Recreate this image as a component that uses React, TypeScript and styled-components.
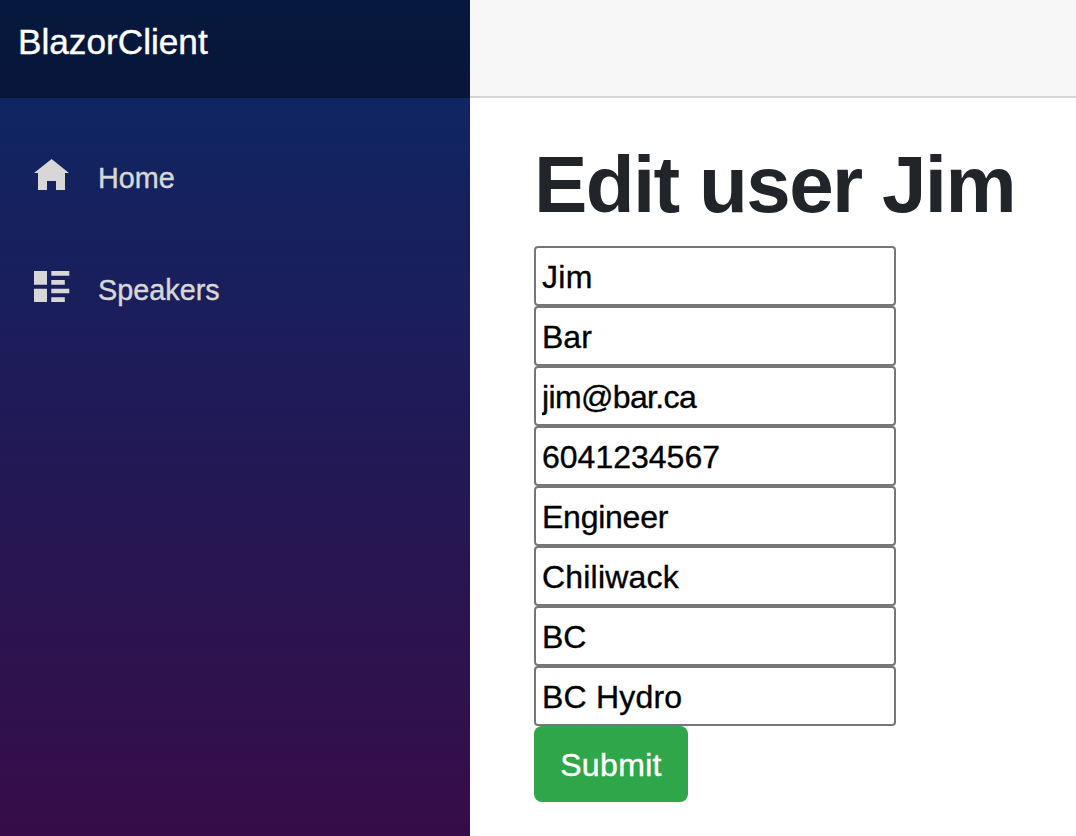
import React from "react";
import styled, { createGlobalStyle } from "styled-components";

const GlobalStyle = createGlobalStyle`
  * { box-sizing: border-box; }
  body {
    margin: 0;
    overflow: hidden;
    background: #fff;
    font-family: "Liberation Sans", Arial, sans-serif;
    color: #212529;
  }
`;

const Page = styled.div`
  display: flex;
  width: 1076px;
  height: 836px;
  overflow: hidden;
`;

const Sidebar = styled.aside`
  flex: none;
  width: 470px;
  height: 836px;
  background: linear-gradient(180deg, rgb(10, 41, 102) 0%, rgb(54, 12, 72) 836px);
`;

const Brand = styled.header`
  display: flex;
  align-items: center;
  height: 98px;
  padding: 0 18px 14px;
  background: rgba(0, 0, 0, 0.4);
  color: #fff;
`;

const Label = styled.span<{ $size: number; $spacing?: number }>`
  font-size: ${(p) => p.$size}px;
  letter-spacing: ${(p) => p.$spacing ?? 0}px;
  white-space: nowrap;
  -webkit-text-stroke: 0.4px currentColor;
`;

const Nav = styled.nav`
  display: flex;
  flex-direction: column;
  gap: 32px;
  padding: 40px 32px;
`;

const NavItem = styled.a`
  display: flex;
  align-items: center;
  gap: 28px;
  height: 80px;
  color: #d7d7d7;
`;

const NavIcon = styled.svg`
  flex: none;
  width: 38px;
  height: 38px;
  margin-top: -6px;
  fill: currentColor;
`;

const Main = styled.main`
  flex: 1;
`;

const TopRow = styled.div`
  height: 98px;
  background: #f7f7f7;
  border-bottom: 2px solid #d6d5d5;
`;

const Content = styled.section`
  padding: 39px 0 0 64px;
`;

const Title = styled.h1`
  margin: 0 0 13px;
  height: 96px;
  font-size: 80px;
  font-weight: 700;
  line-height: 96px;
  letter-spacing: -1.65px;
  white-space: nowrap;
`;

const Form = styled.form`
  display: flex;
  flex-direction: column;
  align-items: flex-start;
`;

const Field = styled.input<{ $spacing: number }>`
  display: block;
  width: 362px;
  height: 60px;
  padding: 2px 6px 0;
  border: 2px solid #767676;
  border-radius: 4px;
  background: #fff;
  color: #000;
  font: 32px "Liberation Sans", Arial, sans-serif;
  letter-spacing: ${(p) => p.$spacing}px;
  -webkit-text-stroke: 0.35px currentColor;
`;

const Submit = styled.button`
  width: 154px;
  height: 76px;
  padding: 2px 0 0;
  border: 0;
  border-radius: 8px;
  background: #30a64a;
  color: #fff;
  font: 32px "Liberation Sans", Arial, sans-serif;
  letter-spacing: 0.35px;
  -webkit-text-stroke: 0.4px currentColor;
`;

const fields = [
  { value: "Jim", spacing: 0.3 },
  { value: "Bar", spacing: 0 },
  { value: "jim@bar.ca", spacing: -0.65 },
  { value: "6041234567", spacing: 0 },
  { value: "Engineer", spacing: -0.25 },
  { value: "Chiliwack", spacing: 0.2 },
  { value: "BC", spacing: 0 },
  { value: "BC Hydro", spacing: 0.2 },
];

export default function App() {
  return (
    <Page>
      <GlobalStyle />
      <Sidebar>
        <Brand><Label $size={35.2}>BlazorClient</Label></Brand>
        <Nav>
          <NavItem>
            <NavIcon viewBox="0 0 38 38">
              <path d="M19.600 3L2 17h4v17h9V25h9v9h9V17h4z" />
            </NavIcon>
            <Label $size={28.8}>Home</Label>
          </NavItem>
          <NavItem>
            <NavIcon viewBox="0 0 38 38">
              <path d="M2 3h13v13.700H2zM19.300 3h18v4.700h-18zM19.300 12h13.500v4.700H19.300zM2 20.700h13V34H2zM19.300 20.700h18v4.600h-18zM19.300 29.300h13.500V34H19.300z" />
            </NavIcon>
            <Label $size={28.8}>Speakers</Label>
          </NavItem>
        </Nav>
      </Sidebar>
      <Main>
        <TopRow />
        <Content>
          <Title>Edit user Jim</Title>
          <Form onSubmit={(e) => e.preventDefault()}>
            {fields.map((f) => <Field key={f.value} defaultValue={f.value} $spacing={f.spacing} />)}
            <Submit type="submit">Submit</Submit>
          </Form>
        </Content>
      </Main>
    </Page>
  );
}
